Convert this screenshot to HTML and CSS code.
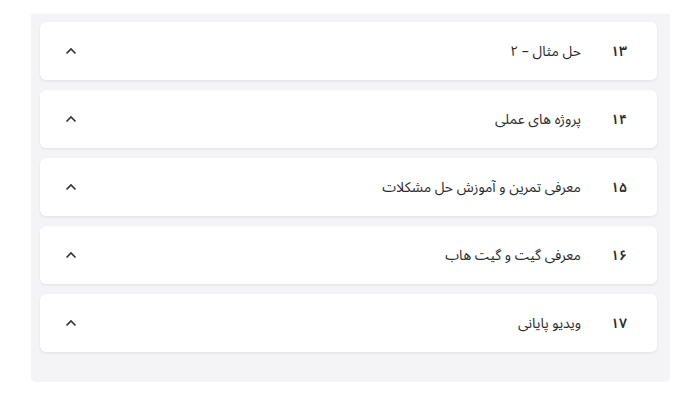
FILE: index.html
```html
<!DOCTYPE html>
<html lang="fa" dir="rtl">
<head>
  <meta charset="UTF-8">
  <meta name="viewport" content="width=device-width, initial-scale=1.0">
  <title>سرفصل ها</title>
  <link rel="stylesheet" href="styles.css">
</head>
<body>
  <div class="chapters">
    <div class="chapter">
      <span class="num">۱۳</span>
      <span class="title">حل مثال – ۲</span>
      <svg class="chevron" width="12" height="8" viewBox="0 0 12 8"><path d="M1.5 6.5 L6 2 L10.5 6.5" /></svg>
    </div>
    <div class="chapter">
      <span class="num">۱۴</span>
      <span class="title">پروژه های عملی</span>
      <svg class="chevron" width="12" height="8" viewBox="0 0 12 8"><path d="M1.5 6.5 L6 2 L10.5 6.5" /></svg>
    </div>
    <div class="chapter">
      <span class="num">۱۵</span>
      <span class="title">معرفی تمرین و آموزش حل مشکلات</span>
      <svg class="chevron" width="12" height="8" viewBox="0 0 12 8"><path d="M1.5 6.5 L6 2 L10.5 6.5" /></svg>
    </div>
    <div class="chapter">
      <span class="num">۱۶</span>
      <span class="title">معرفی گیت و گیت هاب</span>
      <svg class="chevron" width="12" height="8" viewBox="0 0 12 8"><path d="M1.5 6.5 L6 2 L10.5 6.5" /></svg>
    </div>
    <div class="chapter">
      <span class="num">۱۷</span>
      <span class="title">ویدیو پایانی</span>
      <svg class="chevron" width="12" height="8" viewBox="0 0 12 8"><path d="M1.5 6.5 L6 2 L10.5 6.5" /></svg>
    </div>
  </div>
</body>
</html>
```

FILE: styles.css
```css
body {
  margin: 0;
  background: #fff;
  font-family: "Noto Sans Arabic", "DejaVu Sans", sans-serif;
  color: #2b2b2b;
}
.chapters {
  margin: 14px 30px 0 31px;
  padding: 8px 13px 30px 9px;
  background-color: #f4f4f6;
  border-radius: 0 0 5px 5px;
  display: flex;
  flex-direction: column;
  gap: 10px;
}
.chapter {
  height: 58px;
  background-color: #fff;
  border-radius: 6px;
  box-shadow: 0 1px 3px rgba(0, 0, 0, 0.08);
  display: flex;
  align-items: center;
  padding: 0 30px 0 25px;
}
.num {
  font-size: 14px;
  font-weight: 600;
  min-width: 14px;
  margin-left: 30px;
}
.title {
  font-size: 14px;
}
.chevron {
  margin-right: auto;
  fill: none;
  stroke: #333;
  stroke-width: 1.6;
}
```
